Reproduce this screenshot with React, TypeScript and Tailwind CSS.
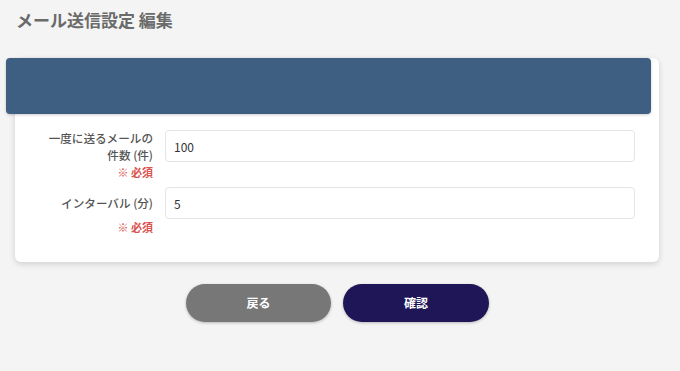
const font = { fontFamily: '"Noto Sans CJK JP", "Noto Sans", sans-serif' };

function Field({ label, value }: { label: string[]; value: string }) {
  return (
    <div className="flex items-start gap-3">
      <div className="w-[138px] shrink-0 flex flex-col items-end">
        <div className="min-h-[32px] flex flex-col justify-center items-end text-right text-[11.6px] leading-[17px] text-[#555] font-medium">
          {label.map((l) => (
            <span key={l}>{l}</span>
          ))}
        </div>
        <span className="text-[11px] leading-[16px] text-[#d9534f] font-bold">※ 必須</span>
      </div>
      <input
        defaultValue={value}
        className="w-[470px] h-[32px] rounded border border-[#e4e4e4] bg-white px-2 text-[12px] text-[#333] outline-none"
        style={font}
      />
    </div>
  );
}

export default function App() {
  return (
    <div className="w-[680px] h-[371px] bg-[#f4f4f4] overflow-hidden" style={font}>
      <h1 className="pl-4 pt-2 text-[17px] leading-6 font-bold text-[#6a6a6a]">メール送信設定 編集</h1>
      <div className="ml-[15px] mt-[26px] w-[644px] bg-white rounded-md shadow-[0_2px_6px_rgba(0,0,0,0.15)] pb-[27px]">
        <div className="ml-[-9px] w-[645px] h-[56px] rounded-sm bg-[#3f5f82] shadow-[0_1px_3px_rgba(0,0,0,0.2)]" />
        <div className="pt-4 flex flex-col gap-[7px]">
          <Field label={["一度に送るメールの", "件数 (件)"]} value="100" />
          <Field label={["インターバル (分)"]} value="5" />
        </div>
      </div>
      <div className="mt-[22px] ml-[186px] flex gap-3">
        <button className="w-[145px] h-[38px] rounded-full bg-[#777] text-white text-[12px] font-bold shadow-[0_1px_3px_rgba(0,0,0,0.25)]">
          戻る
        </button>
        <button className="w-[146px] h-[38px] rounded-full bg-[#1e1656] text-white text-[12px] font-bold shadow-[0_1px_3px_rgba(0,0,0,0.25)]">
          確認
        </button>
      </div>
    </div>
  );
}
